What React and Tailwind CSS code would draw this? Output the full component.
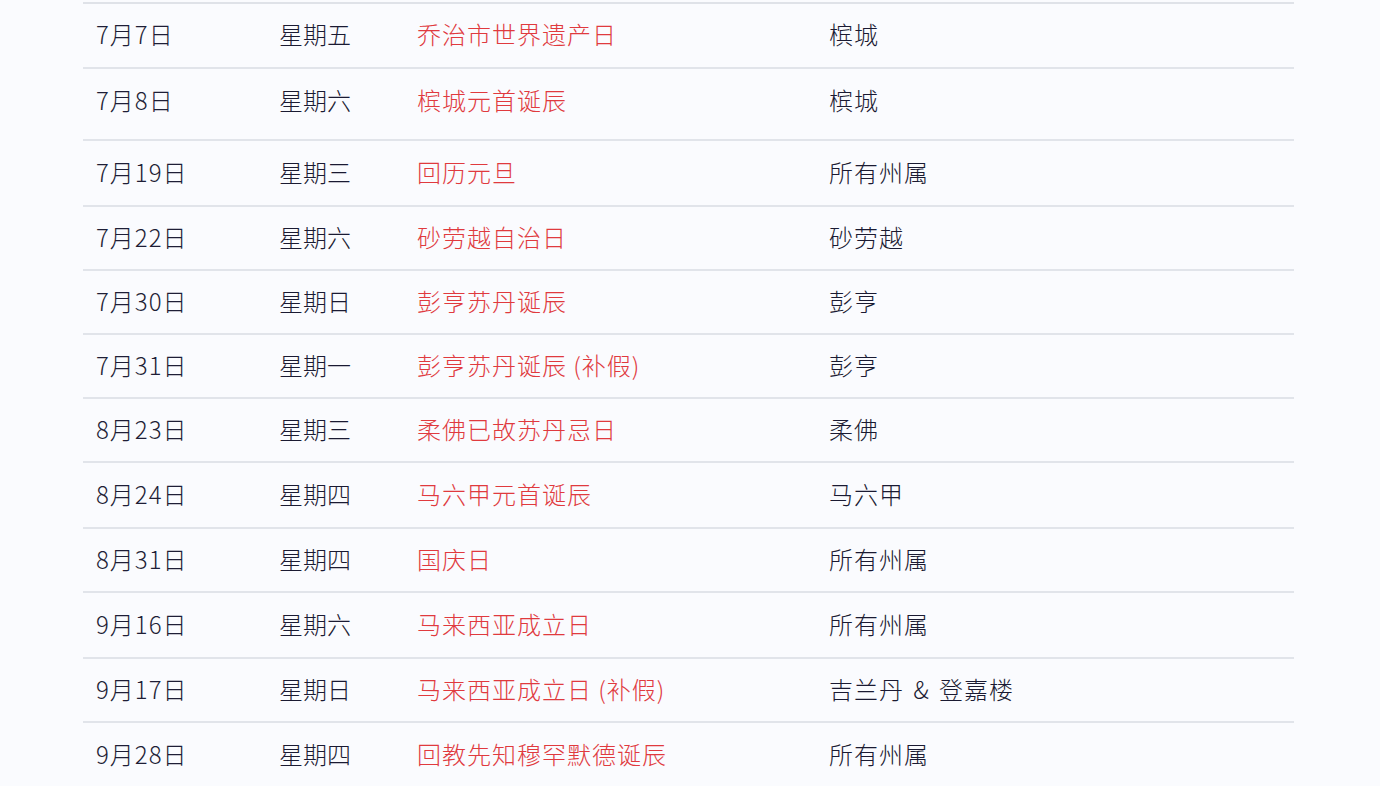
import React from "react";

const rows = [
  ["7月7日", "星期五", "乔治市世界遗产日", "槟城", 65, 3],
  ["7月8日", "星期六", "槟城元首诞辰", "槟城", 72, 9],
  ["7月19日", "星期三", "回历元旦", "所有州属", 66, 3],
  ["7月22日", "星期六", "砂劳越自治日", "砂劳越", 64, 3],
  ["7月30日", "星期日", "彭亨苏丹诞辰", "彭亨", 64, 3],
  ["7月31日", "星期一", "彭亨苏丹诞辰 (补假)", "彭亨", 64, 3],
  ["8月23日", "星期三", "柔佛已故苏丹忌日", "柔佛", 64, 3],
  ["8月24日", "星期四", "马六甲元首诞辰", "马六甲", 66, 3],
  ["8月31日", "星期四", "国庆日", "所有州属", 64, 3],
  ["9月16日", "星期六", "马来西亚成立日", "所有州属", 66, 3],
  ["9月17日", "星期日", "马来西亚成立日 (补假)", "吉兰丹 & 登嘉楼", 64, 3],
  ["9月28日", "星期四", "回教先知穆罕默德诞辰", "所有州属", 66, 3],
];

export default function App() {
  return (
    <div
      className="w-[1380px] h-[786px] overflow-hidden bg-[#fafbfe] pt-[2px]"
      style={{ fontFamily: '"Noto Sans CJK SC", "Noto Sans", sans-serif' }}
    >
      <div className="ml-[83px] w-[1211px] border-t-2 border-[#dfe2e8]">
        {rows.map(([d, w, h, s, ht, pb], i) => (
          <div
            key={i}
            className="grid grid-cols-[183px_138px_412px_1fr] items-center px-[13px] border-b-2 border-[#e1e4ea] text-[24px] leading-none font-light"
            style={{ height: ht, paddingBottom: pb }}
          >
            <div className="text-[#1e1e36] tracking-[1px]">{d}</div>
            <div className="text-[#1a1a32]">{w}</div>
            <div className="text-[#e03a3e] tracking-[1px]">{h}</div>
            <div className="text-[#1a1a32] tracking-[1px] [word-spacing:3px]">{s}</div>
          </div>
        ))}
      </div>
    </div>
  );
}
